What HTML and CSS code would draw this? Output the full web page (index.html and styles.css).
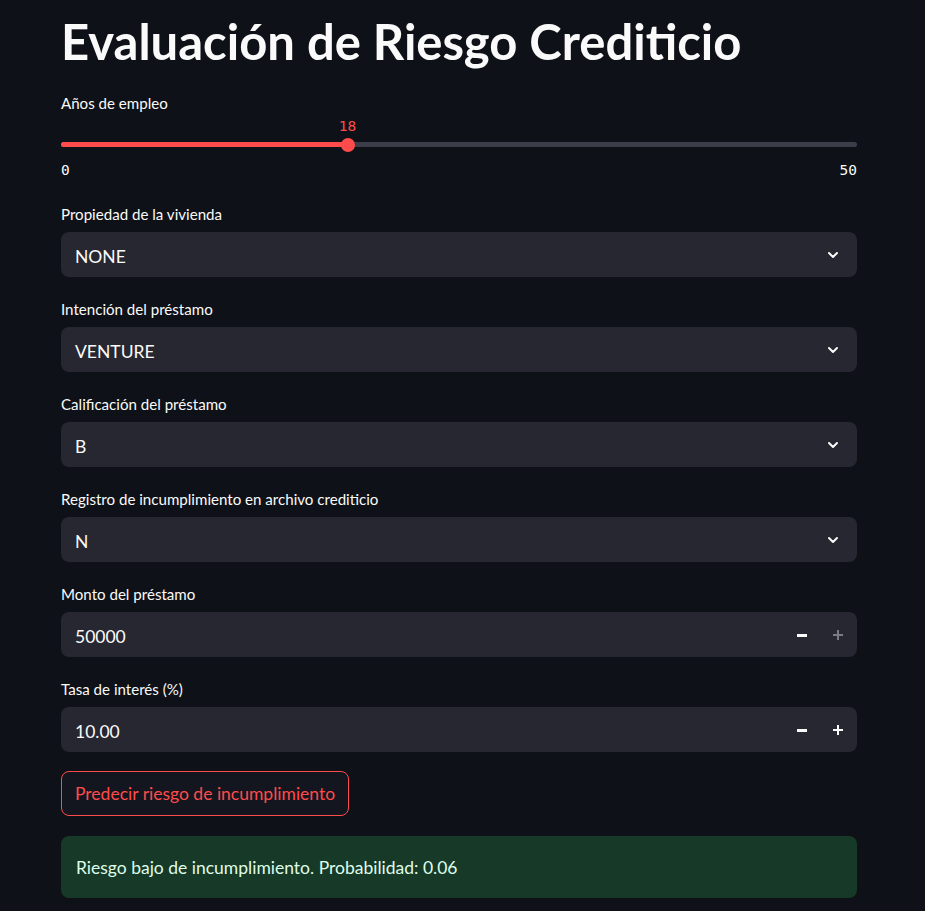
FILE: index.html
```html
<!DOCTYPE html>
<html lang="es">
<head>
<meta charset="utf-8">
<link rel="stylesheet" href="styles.css">
</head>
<body>
<main class="main">
  <h1 class="title">Evaluación de Riesgo Crediticio</h1>

  <div class="field slider-field">
    <div class="label">Años de empleo</div>
    <div class="slider">
      <div class="slider-value-row"><span class="slider-value" style="left:36%">18</span></div>
      <div class="track">
        <div class="track-fill" style="width:36%"></div>
        <div class="thumb" style="left:36%"></div>
      </div>
      <div class="ticks"><span>0</span><span>50</span></div>
    </div>
  </div>

  <div class="field">
    <div class="label">Propiedad de la vivienda</div>
    <div class="box select"><span class="val">NONE</span>
      <svg class="chev" viewBox="0 0 24 24" width="16" height="16"><path d="M6 9l6 6 6-6" fill="none" stroke="#fafafa" stroke-width="3" stroke-linecap="round" stroke-linejoin="round"/></svg>
    </div>
  </div>

  <div class="field">
    <div class="label">Intención del préstamo</div>
    <div class="box select"><span class="val">VENTURE</span>
      <svg class="chev" viewBox="0 0 24 24" width="16" height="16"><path d="M6 9l6 6 6-6" fill="none" stroke="#fafafa" stroke-width="3" stroke-linecap="round" stroke-linejoin="round"/></svg>
    </div>
  </div>

  <div class="field">
    <div class="label">Calificación del préstamo</div>
    <div class="box select"><span class="val">B</span>
      <svg class="chev" viewBox="0 0 24 24" width="16" height="16"><path d="M6 9l6 6 6-6" fill="none" stroke="#fafafa" stroke-width="3" stroke-linecap="round" stroke-linejoin="round"/></svg>
    </div>
  </div>

  <div class="field">
    <div class="label">Registro de incumplimiento en archivo crediticio</div>
    <div class="box select"><span class="val">N</span>
      <svg class="chev" viewBox="0 0 24 24" width="16" height="16"><path d="M6 9l6 6 6-6" fill="none" stroke="#fafafa" stroke-width="3" stroke-linecap="round" stroke-linejoin="round"/></svg>
    </div>
  </div>

  <div class="field">
    <div class="label">Monto del préstamo</div>
    <div class="box number"><span class="val">50000</span>
      <div class="steppers">
        <span class="step"><svg viewBox="0 0 10 10" width="10" height="10"><rect x="0" y="4" width="10" height="3" fill="#fafafa"/></svg></span>
        <span class="step dim"><svg viewBox="0 0 10 10" width="10" height="10"><rect x="0" y="4" width="10" height="2" fill="#fafafa"/><rect x="4" y="0" width="2" height="10" fill="#fafafa"/></svg></span>
      </div>
    </div>
  </div>

  <div class="field">
    <div class="label">Tasa de interés (%)</div>
    <div class="box number"><span class="val">10.00</span>
      <div class="steppers">
        <span class="step"><svg viewBox="0 0 10 10" width="10" height="10"><rect x="0" y="4" width="10" height="3" fill="#fafafa"/></svg></span>
        <span class="step"><svg viewBox="0 0 10 10" width="10" height="10"><rect x="0" y="4" width="10" height="2" fill="#fafafa"/><rect x="4" y="0" width="2" height="10" fill="#fafafa"/></svg></span>
      </div>
    </div>
  </div>

  <div class="btn-row"><button class="btn">Predecir riesgo de incumplimiento</button></div>

  <div class="alert">Riesgo bajo de incumplimiento. Probabilidad: 0.06</div>
</main>
</body>
</html>
```

FILE: styles.css
```css
html, body {
  margin: 0;
  padding: 0;
  background: #0e1117;
  color: #fafafa;
  font-family: Lato, "Noto Sans", sans-serif;
}
.main {
  width: 796px;
  margin-left: 61px;
  display: flex;
  flex-direction: column;
  gap: 22px;
}
.title {
  margin: 0;
  padding-top: 12px;
  font-size: 49px;
  line-height: 58px;
  font-weight: 700;
  letter-spacing: 0;
  margin-bottom: 1px;
}
.field {
  display: flex;
  flex-direction: column;
}
.label {
  font-size: 15.1px;
  line-height: 20px;
  margin-bottom: 8px;
}
.slider-field .label { margin-bottom: 4px; }
.slider-field { margin-bottom: 3px; }
.slider {
  display: flex;
  flex-direction: column;
}
.slider-value-row {
  position: relative;
  height: 18px;
}
.slider-value {
  position: absolute;
  top: 0;
  transform: translateX(-50%);
  color: #ff4b4b;
  font-family: "DejaVu Sans Mono", "Liberation Mono", monospace;
  font-size: 14.5px;
  line-height: 18px;
}
.track {
  position: relative;
  height: 5px;
  margin-top: 7px;
  background: #3b3e48;
  border-radius: 3px;
}
.track-fill {
  height: 100%;
  background: #ff4b4b;
  border-radius: 3px;
}
.thumb {
  position: absolute;
  top: 50%;
  width: 14px;
  height: 14px;
  border-radius: 50%;
  background: #ff4b4b;
  transform: translate(-50%, -50%);
}
.ticks {
  display: flex;
  justify-content: space-between;
  margin-top: 14px;
  font-family: "DejaVu Sans Mono", "Liberation Mono", monospace;
  font-size: 14.5px;
  line-height: 18px;
  color: #fafafa;
}
.box {
  height: 45px;
  background: #262730;
  border-radius: 8px;
  display: flex;
  align-items: center;
  justify-content: space-between;
  padding: 0 14px;
  font-size: 17.5px;
  box-sizing: border-box;
}
.val { padding-top: 3px; }
.chev { margin-right: 2px; }
.steppers {
  display: flex;
  align-items: center;
  margin-right: -13px;
}
.step {
  width: 36px;
  height: 45px;
  display: flex;
  align-items: center;
  justify-content: center;
}
.step.dim { opacity: 0.4; }
.btn-row {
  display: flex;
  margin-top: -3px;
}
.btn {
  background: #13161e;
  border: 1px solid #ff4b4b;
  color: #ff4b4b;
  border-radius: 8px;
  height: 45px;
  padding: 0 13px;
  font-family: inherit;
  font-size: 17.5px;
}
.alert {
  margin-top: -2px;
  height: 62px;
  box-sizing: border-box;
  background: #173928;
  color: #dffde9;
  border-radius: 8px;
  padding: 0 15px;
  display: flex;
  align-items: center;
  font-size: 17.5px;
}
```
